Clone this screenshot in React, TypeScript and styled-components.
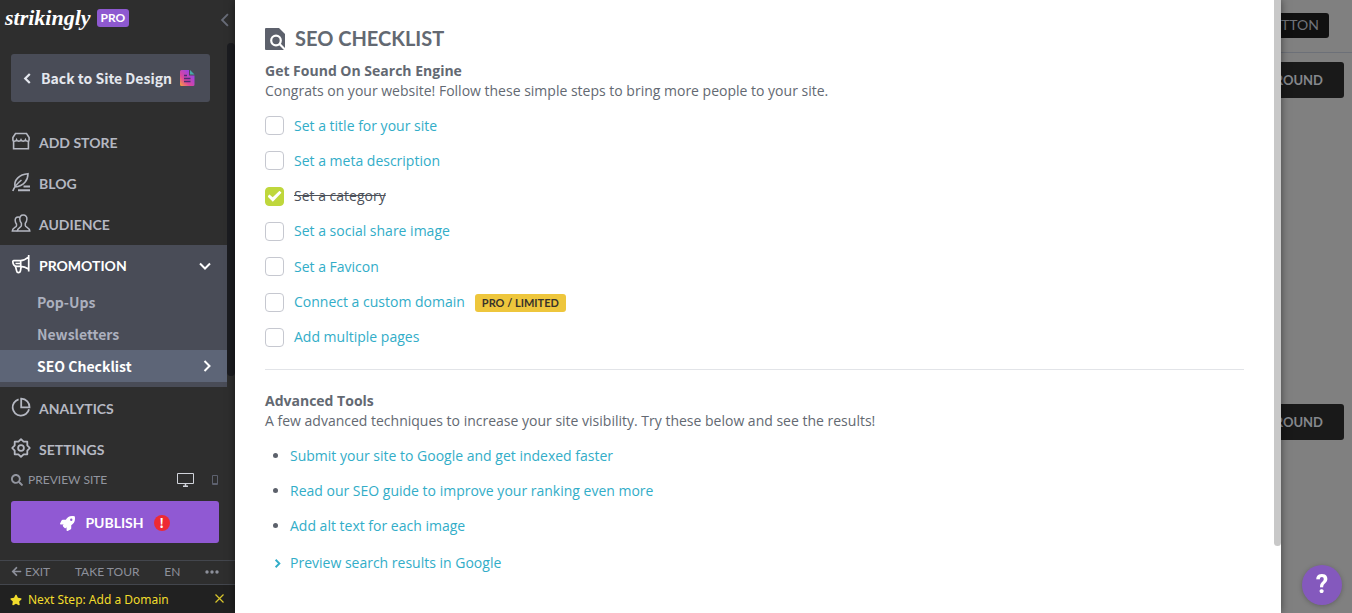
import React from "react";
import styled, { createGlobalStyle, css } from "styled-components";
import { FaRocket, FaSearch, FaStar, FaArrowLeft } from "react-icons/fa";

const caps = `Lato, "Open Sans", sans-serif`;
const body = `"Open Sans", "Noto Sans", sans-serif`;
const menu = `"Noto Sans CJK SC", "Noto Sans", sans-serif`;

const GlobalStyle = createGlobalStyle`
  * { box-sizing: border-box; }
  body { margin: 0; font-family: ${body}; font-size: 14px; background: #808080; }
  a { text-decoration: none; }
  button { border: 0; padding: 0; background: none; cursor: pointer; font: inherit; }
  ul { list-style: none; margin: 0; padding: 0; }
  svg { display: block; flex: none; }
`;

const Shell = styled.div`
  display: grid;
  grid-template-columns: 235px minmax(0, 1fr) 71px;
  height: 100vh;
  overflow: hidden;
`;

/* ---------- sidebar ---------- */

const Sidebar = styled.aside`
  display: flex;
  flex-direction: column;
  min-height: 0;
  background: #2e2e2e;
`;

const Brand = styled.header`
  display: flex;
  align-items: center;
  flex: none;
  height: 43px;
  padding: 0 3px 7px 5px;
`;

const Logo = styled.a`
  font: italic 700 22px/28px "Liberation Serif", serif;
  color: #fff;
`;

const ProTag = styled.span`
  margin-left: 6px;
  padding: 0 4px;
  border-radius: 3px;
  background: #8e59d0;
  color: #fff;
  font: 700 12px/18px ${caps};
`;

const Collapse = styled.button`
  display: flex;
  margin: 3px 0 0 auto;
  color: #686c78;
`;

const NavArea = styled.div`
  display: flex;
  flex: 1;
  min-height: 0;
  overflow: hidden;
`;

const Nav = styled.nav`
  flex: 1;
  min-width: 0;
`;

const NavScroll = styled.div`
  flex: none;
  width: 8px;
  height: 78%;
  border-radius: 4px;
  background: #1b1c20;
`;

const BackButton = styled.button`
  display: flex;
  align-items: center;
  gap: 8px;
  height: 48px;
  margin: 11px 16px 20px 11px;
  padding: 0 15px 0 11px;
  border-radius: 3px;
  background: #494c57;
  color: #e4e7ee;
  font: 700 14px/24px ${menu};
  white-space: nowrap;
`;

const NavItem = styled.a<{ $open?: boolean }>`
  display: flex;
  align-items: center;
  gap: 8px;
  height: 41px;
  padding: 0 16px 0 11px;
  color: ${(p) => (p.$open ? "#fff" : "#b5b8c2")};
  font: 700 14px/20px ${caps};

  svg:first-child { margin-top: -4px; }
  svg + span + svg { margin-left: auto; }
`;

const NavGroup = styled.div`
  margin-bottom: 1px;
  padding-bottom: 5px;
  background: #494c57;
`;

const SubItem = styled.a<{ $active?: boolean }>`
  display: flex;
  align-items: center;
  justify-content: space-between;
  height: 32px;
  padding: 0 14px 0 37px;
  color: #acb0be;
  font: 700 14px/22px ${menu};
  ${(p) => p.$active && css`
    color: #fff;
    background: #5d6577;
  `}
`;

const PreviewRow = styled.div`
  display: flex;
  align-items: center;
  flex: none;
  gap: 5px;
  height: 20px;
  padding: 0 17px 0 11px;
  color: #92959f;
  font: 400 12px/20px ${caps};
`;

const Devices = styled.div`
  display: flex;
  align-items: center;
  gap: 18px;
  margin-left: auto;
`;

const IconButton = styled.button<{ $on?: boolean }>`
  display: flex;
  color: ${(p) => (p.$on ? "#d0d3da" : "#5d616e")};
`;

const Publish = styled.button`
  display: flex;
  flex: none;
  align-items: center;
  justify-content: center;
  gap: 10px;
  height: 42px;
  margin: 11px 16px 17px 11px;
  padding-top: 2px;
  border-radius: 3px;
  background: #9059d3;
  color: #fff;
  font: 700 14px/20px ${caps};
`;

const Alert = styled.span`
  width: 16px;
  height: 16px;
  border-radius: 50%;
  background: #ee2a33;
  font: 700 13px/16px ${menu};
`;

const FooterLinks = styled.div`
  display: flex;
  flex: none;
  align-items: center;
  justify-content: space-between;
  height: 25px;
  padding: 0 16px 2px 11px;
  border: solid #43464d;
  border-width: 1px 0;
  font: 400 12px/20px ${caps};
`;

const FooterLink = styled.a`
  display: flex;
  align-items: center;
  gap: 3px;
  color: #8d909b;
`;

const NextStep = styled.div`
  display: flex;
  flex: none;
  align-items: center;
  gap: 6px;
  height: 28px;
  padding: 2px 11px 0 10px;
  background: #212121;
  color: #f2dc2c;
  font: 400 12px/20px "Noto Sans", sans-serif;
`;

const Dismiss = styled.button`
  display: flex;
  margin: 0 0 4px auto;
  color: #d8c52c;
`;

/* ---------- checklist panel ---------- */

const Panel = styled.main`
  display: flex;
  min-width: 0;
  background: #fff;
  box-shadow: 0 0 8px rgba(0, 0, 0, 0.5);
  z-index: 1;
`;

const PanelContent = styled.div`
  flex: 1;
  min-width: 0;
  padding: 28px 30px;
  color: #636972;
  line-height: 20px;
`;

const PanelScroll = styled.div`
  flex: none;
  width: 7px;
  height: 89%;
  border-radius: 0 0 4px 4px;
  background: #c8c8c8;
`;

const Title = styled.h1`
  display: flex;
  align-items: center;
  gap: 10px;
  height: 22px;
  margin: 0 0 11px;
  font: 700 20px/20px ${caps};

  span { padding-bottom: 2px; }
`;

const Heading = styled.h2`
  margin: 0;
  font: 700 14px/20px ${body};
`;

const Lead = styled.p`
  margin: 0 0 7px;
`;

const TaskList = styled.ul`
  display: flex;
  flex-direction: column;
  justify-content: space-between;
  min-height: 247px;
`;

const Row = styled.li`
  display: flex;
  align-items: center;
  height: 35px;
`;

const Check = styled.input`
  appearance: none;
  display: grid;
  place-items: center;
  width: 19px;
  height: 19px;
  margin: 0 10px 0 0;
  border: 1px solid #c6c8d0;
  border-radius: 4px;
  background: #fff;

  &:checked {
    border-color: #bfd73c;
    background: #bfd73c;
  }
  &:checked::before {
    content: "";
    width: 14px;
    height: 11px;
    background: #fff;
    clip-path: polygon(0 52%, 14% 34%, 37% 60%, 86% 0, 100% 18%, 38% 100%);
  }
`;

const TextLink = styled.a`
  color: #32adc8;
`;

const DoneLabel = styled.label`
  color: #4b5059;
  text-decoration: line-through;
`;

const PlanBadge = styled.span`
  margin: 2px 0 0 10px;
  padding: 0 7px;
  border-radius: 3px;
  background: #eec63c;
  color: #38332a;
  font: 700 11px/18px ${caps};
`;

const Divider = styled.hr`
  height: 1px;
  margin: 14px 0 21px;
  border: 0;
  background: #e2e4e8;
`;

const Bullet = styled.li`
  display: flex;
  align-items: center;
  height: 35px;

  &::before {
    content: "";
    width: 5px;
    height: 5px;
    margin: 0 12px 0 8px;
    border-radius: 50%;
    background: #5c616b;
  }
`;

const PreviewToggle = styled.button`
  display: flex;
  align-items: center;
  gap: 8px;
  margin-top: 10px;
  padding-left: 8px;
  color: #32adc8;
`;

/* ---------- dimmed page editor ---------- */

const Editor = styled.div`
  display: flex;
  flex-direction: column;
  min-width: 0;
  overflow: hidden;
  background: #808080;
`;

const EditorBar = styled.div`
  display: flex;
  flex: none;
  align-items: center;
  justify-content: flex-end;
  height: 53px;
  padding: 0 23px 2px 0;
  border-bottom: 1px solid #6c7078;
`;

const EditorSection = styled.section`
  display: flex;
  flex: none;
  align-items: flex-start;
  justify-content: flex-end;
  height: 342px;
  padding: 9px 8px 0 0;
`;

const DarkButton = styled.button<{ $small?: boolean }>`
  height: ${(p) => (p.$small ? 25 : 36)}px;
  padding: 0 ${(p) => (p.$small ? 10 : 21)}px;
  border-radius: 3px;
  background: ${(p) => (p.$small ? "#101010" : "#191919")};
  color: ${(p) => (p.$small ? "#70737a" : "#85878c")};
  font: ${(p) => (p.$small ? "400 14px" : "700 13px")}/20px ${caps};
`;

const Help = styled.button`
  position: fixed;
  right: 10px;
  bottom: 8px;
  z-index: 2;
  width: 40px;
  height: 40px;
  border-radius: 50%;
  background: #8459bd;
  box-shadow: 0 1px 5px rgba(0, 0, 0, 0.25);
  color: #fff;
  font: 700 25px/40px Roboto, sans-serif;
`;

/* ---------- icons ---------- */

const Line = ({ children, w = 1.6 }: { children: React.ReactNode; w?: number }) => (
  <svg width="20" height="20" viewBox="0 0 20 20" fill="none" stroke="currentColor" strokeWidth={w} aria-hidden>
    {children}
  </svg>
);

const Chevron = ({ dir, size = 12, w = 2 }: { dir: "left" | "right" | "down"; size?: number; w?: number }) => (
  <svg width={size} height={size} viewBox="0 0 12 12" fill="none" stroke="currentColor" strokeWidth={w} aria-hidden>
    <path d={{ left: "M8.5 1 3.5 6l5 5", right: "M3.5 1l5 5-5 5", down: "M1 3.5l5 5 5-5" }[dir]} />
  </svg>
);

const StoreIcon = () => (
  <Line>
    <path d="M4.500 2.500h11l2.600 4v2.500c0 .8-.6 1.300-1.400 1.300-1.100 0-2-.6-2.300-1.500-.5.900-1.200 1.300-2.200 1.300s-1.800-.5-2.200-1.300c-.4.8-1.200 1.300-2.200 1.300s-1.700-.4-2.200-1.300c-.3.900-1.200 1.500-2.300 1.500-.8 0-1.400-.5-1.400-1.300V6.500z" />
    <path d="M2.600 10v7.700h14.800V10" />
  </Line>
);

const BlogIcon = () => (
  <Line>
    <path d="M1.800 19C3 15.500 5.500 12 10.500 8M4 15C2.600 8.500 8 2.200 17 1.700c0 6-3.800 12.500-13 13.300z" />
    <path d="M12.500 14.500H19M7 18.300h12" strokeWidth="1.900" />
  </Line>
);

const AudienceIcon = () => (
  <Line w={1.5}>
    <path d="M12.200 2c2.500 0 3.900 1.700 3.700 4.300-.1 1.700-.6 3-1.600 4v2.200c0 1.800 4.500 2.300 4.500 5.500H6.400c0-3.500 4-3.700 4-5.500v-2.200c-1-1-1.500-2.300-1.600-4C8.600 3.700 9.700 2 12.200 2z" />
    <path d="M9 4.600C8.500 4.200 8 4 7.300 4 5 4 4 5.500 4.200 7.600c.1 1.500.5 2.500 1.300 3.400v1.700c0 1.800-4.200 2-4.200 5.300h5" />
  </Line>
);

const MegaphoneIcon = () => (
  <Line w={1.700}>
    <path d="M17.700 1v16.500M17.500 3.200C15 5.300 12.500 6.700 9.500 6.700H2.800c-.7 0-1.100.4-1 1.200.3 3 1.500 4.400 3.700 4.400h4c3 0 5.500.9 8 2.700M9.700 6.700v5.600M4.500 9.500h5" />
    <path d="M4.300 11.800l1.400 5.300c.2 1 .8 1.500 1.700 1.500 1.100 0 1.800-.6 2-1.600l.8-4.500" />
  </Line>
);

const AnalyticsIcon = () => (
  <Line w={1.8}>
    <path d="M7.600 2.300A8.300 8.300 0 1 0 18 12.200" />
    <path d="M10.200 1.700v8.600h8.300c.2-4.700-3.300-8.400-8.300-8.600z" />
  </Line>
);

const SettingsIcon = () => (
  <Line w={1.8}>
    <path d="M10 1.200L12.600 3.700H16.300V7.400L18.800 10L16.300 12.600V16.300H12.600L10 18.800L7.400 16.300H3.700V12.600L1.200 10L3.700 7.400V3.700H7.400z" strokeLinejoin="round" />
    <circle cx="10" cy="10" r="2.900" />
  </Line>
);

const PageIcon = () => (
  <svg width="15" height="16" viewBox="0 0 15 16" aria-hidden>
    <defs>
      <linearGradient id="page" x1="0" y1="1" x2="1" y2="0">
        <stop offset="0" stopColor="#f8a33c" />
        <stop offset="0.35" stopColor="#dc459c" />
        <stop offset="0.75" stopColor="#a044dc" />
      </linearGradient>
    </defs>
    <path d="M1.500 0H9v5.500h5.500V14.500a1.500 1.500 0 0 1-1.500 1.500H1.500A1.500 1.500 0 0 1 0 14.500v-13A1.500 1.500 0 0 1 1.500 0z" fill="url(#page)" />
    <path d="M10 0l4.500 4.500H10z" fill="#48a9a9" />
    <path d="M4 5.500h3M4 8.500h6.500M4 11.500h6.500" stroke="#4a2e72" strokeWidth="1.500" />
  </svg>
);

const SeoIcon = () => (
  <svg width="20" height="22" viewBox="0 0 20 22" aria-hidden>
    <path d="M1 0h13l6 6v16H1a1 1 0 0 1-1-1V1a1 1 0 0 1 1-1z" fill="#5d616c" />
    <g fill="none" stroke="#fff" strokeWidth="2.200">
      <circle cx="11" cy="12.500" r="4.800" />
      <path d="M14.300 15.800l6 6" />
    </g>
  </svg>
);

const DesktopIcon = () => (
  <svg width="17" height="14" viewBox="0 0 17 14" fill="none" stroke="currentColor" aria-hidden>
    <path d="M.5.5h16v10H.5z" />
    <path d="M8.500 10.500v2.500M6 13.300h5" strokeWidth="1.500" />
  </svg>
);

const PhoneIcon = () => (
  <svg width="6" height="10" viewBox="0 0 6 10" fill="none" stroke="currentColor" aria-hidden>
    <path d="M.5.5h5v9h-5zM.5 8.500h5" />
  </svg>
);

const tasks = [
  { id: "title", text: "Set a title for your site" },
  { id: "meta", text: "Set a meta description" },
  { id: "category", text: "Set a category", done: true },
  { id: "share", text: "Set a social share image" },
  { id: "favicon", text: "Set a Favicon" },
  { id: "domain", text: "Connect a custom domain", badge: "PRO / LIMITED" },
  { id: "pages", text: "Add multiple pages" },
];

const tools = [
  "Submit your site to Google and get indexed faster",
  "Read our SEO guide to improve your ranking even more",
  "Add alt text for each image",
];

export default function App() {
  return (
    <>
      <GlobalStyle />
      <Shell>
        <Sidebar>
          <Brand>
            <Logo href="#">strikingly</Logo>
            <ProTag>PRO</ProTag>
            <Collapse aria-label="Collapse sidebar"><Chevron dir="left" size={14} w={1.6} /></Collapse>
          </Brand>
          <NavArea>
            <Nav>
              <BackButton>
                <Chevron dir="left" size={11} w={2.4} />
                Back to Site Design
                <PageIcon />
              </BackButton>
              <NavItem href="#"><StoreIcon /><span>ADD STORE</span></NavItem>
              <NavItem href="#"><BlogIcon /><span>BLOG</span></NavItem>
              <NavItem href="#"><AudienceIcon /><span>AUDIENCE</span></NavItem>
              <NavGroup>
                <NavItem href="#" $open><MegaphoneIcon /><span>PROMOTION</span><Chevron dir="down" /></NavItem>
                <SubItem href="#">Pop-Ups</SubItem>
                <SubItem href="#">Newsletters</SubItem>
                <SubItem href="#" $active>SEO Checklist<Chevron dir="right" /></SubItem>
              </NavGroup>
              <NavItem href="#"><AnalyticsIcon /><span>ANALYTICS</span></NavItem>
              <NavItem href="#"><SettingsIcon /><span>SETTINGS</span></NavItem>
            </Nav>
            <NavScroll />
          </NavArea>
          <PreviewRow>
            <FaSearch size={12} />
            PREVIEW SITE
            <Devices>
              <IconButton $on aria-label="Desktop preview"><DesktopIcon /></IconButton>
              <IconButton aria-label="Phone preview"><PhoneIcon /></IconButton>
            </Devices>
          </PreviewRow>
          <Publish>
            <FaRocket size={15} />
            PUBLISH
            <Alert>!</Alert>
          </Publish>
          <FooterLinks>
            <FooterLink href="#"><FaArrowLeft size={11} />EXIT</FooterLink>
            <FooterLink href="#">TAKE TOUR</FooterLink>
            <FooterLink href="#">EN</FooterLink>
            <FooterLink href="#" aria-label="More">
              <svg width="14" height="4" viewBox="0 0 14 4" fill="currentColor" aria-hidden>
                <circle cx="2" cy="2" r="1.700" />
                <circle cx="7" cy="2" r="1.700" />
                <circle cx="12" cy="2" r="1.700" />
              </svg>
            </FooterLink>
          </FooterLinks>
          <NextStep>
            <FaStar size={12} />
            Next Step: Add a Domain
            <Dismiss aria-label="Dismiss">
              <svg width="9" height="9" viewBox="0 0 9 9" stroke="currentColor" strokeWidth="1.200" aria-hidden>
                <path d="M.5.5l8 8M8.500.5l-8 8" />
              </svg>
            </Dismiss>
          </NextStep>
        </Sidebar>

        <Panel>
          <PanelContent>
            <Title><SeoIcon /><span>SEO CHECKLIST</span></Title>
            <Heading>Get Found On Search Engine</Heading>
            <Lead>Congrats on your website! Follow these simple steps to bring more people to your site.</Lead>
            <TaskList>
              {tasks.map((t) => (
                <Row key={t.id}>
                  <Check type="checkbox" id={t.id} aria-labelledby={`${t.id}-text`} defaultChecked={t.done} />
                  {t.done ? (
                    <DoneLabel htmlFor={t.id} id={`${t.id}-text`}>{t.text}</DoneLabel>
                  ) : (
                    <TextLink href="#" id={`${t.id}-text`}>{t.text}</TextLink>
                  )}
                  {t.badge && <PlanBadge>{t.badge}</PlanBadge>}
                </Row>
              ))}
            </TaskList>
            <Divider />
            <Heading>Advanced Tools</Heading>
            <Lead>A few advanced techniques to increase your site visibility. Try these below and see the results!</Lead>
            <ul>
              {tools.map((t) => (
                <Bullet key={t}><TextLink href="#">{t}</TextLink></Bullet>
              ))}
            </ul>
            <PreviewToggle>
              <Chevron dir="right" size={9} w={2.5} />
              Preview search results in Google
            </PreviewToggle>
          </PanelContent>
          <PanelScroll />
        </Panel>

        <Editor>
          <EditorBar><DarkButton $small>BUTTON</DarkButton></EditorBar>
          <EditorSection><DarkButton>BACKGROUND</DarkButton></EditorSection>
          <EditorSection><DarkButton>BACKGROUND</DarkButton></EditorSection>
        </Editor>
      </Shell>
      <Help aria-label="Help">?</Help>
    </>
  );
}
